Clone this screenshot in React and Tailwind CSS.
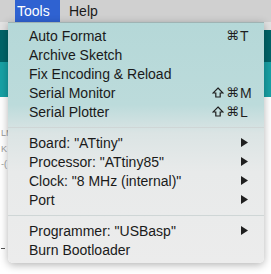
import React from 'react';

// Arduino IDE "Tools" menu open over the editor window
const font = { fontFamily: '"Liberation Sans", Arial, sans-serif' };
const sym = { fontFamily: '"DejaVu Sans", sans-serif' };

const Arrow = () => (
  <svg width="7" height="9" viewBox="0 0 7 9" className="block">
    <path d="M0 0 L7 4.5 L0 9 Z" fill="#1f1f1f" />
  </svg>
);

const ShiftIcon = () => (
  <svg width="12" height="11" viewBox="0 0 12 11" className="mr-[2px] block">
    <path
      d="M6 1 L11 6 L8.2 6 L8.2 10 L3.8 10 L3.8 6 L1 6 Z"
      fill="none"
      stroke="#1f1f1f"
      strokeWidth="1.2"
      strokeLinejoin="miter"
    />
  </svg>
);

const Shortcut = ({ shift, keyChar }) => (
  <div className="flex items-center text-[13px] text-[#1f1f1f]">
    {shift && <ShiftIcon />}
    <span style={sym}>⌘</span>
    <span className="w-[13px] pl-[1px] text-[14px]">{keyChar}</span>
  </div>
);

const Item = ({ label, shortcut, submenu }) => (
  <div className="flex h-[19px] items-center justify-between pl-[21px] pr-[12px] text-[14px] leading-none text-[#1a1a1a]">
    <span>{label}</span>
    {shortcut}
    {submenu && (
      <span className="pr-[4px]">
        <Arrow />
      </span>
    )}
  </div>
);

const Separator = () => (
  <div className="flex h-[12px] items-center">
    <div className="h-px w-full bg-[#cfd6d6]" />
  </div>
);

const App = () => {
  return (
    <div className="relative h-[274px] w-[271px] overflow-hidden bg-white" style={font}>
      {/* menu bar */}
      <div className="flex h-[22px] items-center bg-[#d0d0d0] text-[14px] text-[#1a1a1a]">
        <div className="ml-[15px] flex h-full w-[45px] items-center bg-[#2f62d1] pl-[2px] text-white">Tools</div>
        <div className="ml-[9px]">Help</div>
      </div>

      {/* editor window behind */}
      <div className="h-[8px] bg-[#e2e2e2]" />
      <div className="h-[32px] bg-[#006468]" />
      <div className="h-[35px] bg-[#17a1a5]" />
      <div className="pt-[29px] pl-px text-[9px] text-[#9a9a9a]">
        <div className="h-[17px] leading-[14px]">LM</div>
        <div className="h-[13px] leading-[13px]">K</div>
        <div className="h-[16px] leading-[16px]">-(</div>
        <div className="mt-[76px] h-px w-[4px] bg-[#555]" />
      </div>

      {/* dropdown */}
      <div
        className="absolute left-[8px] top-[22px] h-[241px] w-[256px] rounded-b-[5px] border-t border-[#9fb3b3] pt-[3px] shadow-[0_2px_8px_rgba(0,0,0,0.3)]"
        style={{
          background:
            'linear-gradient(to bottom, #b5d8d8 0%, #bcdbdb 34%, #dbe4e4 46%, #e8eaea 62%, #ececec 100%)',
        }}
      >
        <Item label="Auto Format" shortcut={<Shortcut keyChar="T" />} />
        <Item label="Archive Sketch" />
        <Item label="Fix Encoding & Reload" />
        <Item label="Serial Monitor" shortcut={<Shortcut shift keyChar="M" />} />
        <Item label="Serial Plotter" shortcut={<Shortcut shift keyChar="L" />} />
        <Separator />
        <Item label='Board: "ATtiny"' submenu />
        <Item label='Processor: "ATtiny85"' submenu />
        <Item label='Clock: "8 MHz (internal)"' submenu />
        <Item label="Port" submenu />
        <Separator />
        <Item label='Programmer: "USBasp"' submenu />
        <Item label="Burn Bootloader" />
      </div>
    </div>
  );
};

export default App;
